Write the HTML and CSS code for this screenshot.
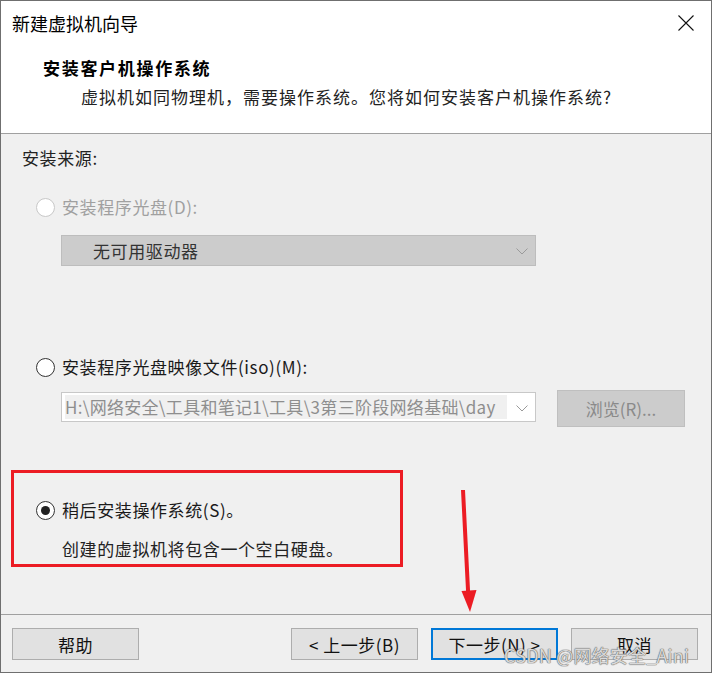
FILE: index.html
```html
<!DOCTYPE html>
<html lang="zh-CN">
<head>
<meta charset="utf-8">
<title>新建虚拟机向导</title>
<link rel="stylesheet" href="styles.css">
</head>
<body>
<div class="window">
  <div class="header">
    <div class="titlebar">
      <span class="title">新建虚拟机向导</span>
      <svg class="close" width="16" height="16" viewBox="0 0 16 16"><path d="M0.5 0.5 L15.5 15.5 M15.5 0.5 L0.5 15.5" stroke="#111" stroke-width="1.1" fill="none"/></svg>
    </div>
    <div class="heading">安装客户机操作系统</div>
    <div class="subtitle">虚拟机如同物理机，需要操作系统。您将如何安装客户机操作系统?</div>
  </div>

  <div class="content">
    <div class="section-label">安装来源:</div>

    <div class="radio-row first disabled">
      <span class="radio"></span>
      <span class="label">安装程序光盘(D):</span>
    </div>
    <div class="select disabled-select">
      <span class="select-text">无可用驱动器</span>
      <svg class="chev" width="12" height="7" viewBox="0 0 12 7"><path d="M0.5 0.5 L6 6 L11.5 0.5" stroke="#9a9a9a" fill="none" stroke-width="1"/></svg>
    </div>

    <div class="radio-row second">
      <span class="radio"></span>
      <span class="label">安装程序光盘映像文件(iso)(M):</span>
    </div>
    <div class="iso-row">
      <div class="select iso-select">
        <span class="select-text iso-text">H:\网络安全\工具和笔记1\工具\3第三阶段网络基础\day</span>
        <svg class="chev" width="12" height="7" viewBox="0 0 12 7"><path d="M0.5 0.5 L6 6 L11.5 0.5" stroke="#9a9a9a" fill="none" stroke-width="1"/></svg>
      </div>
      <div class="browse">浏览(R)...</div>
    </div>

    <div class="highlight">
      <div class="radio-row">
        <span class="radio checked"></span>
        <span class="label">稍后安装操作系统(S)。</span>
      </div>
      <div class="desc">创建的虚拟机将包含一个空白硬盘。</div>
    </div>
  </div>

  <div class="footer">
    <div class="btn">帮助</div>
    <div class="btn-group">
      <div class="btn">&lt; 上一步(B)</div>
      <div class="btn primary">下一步(N) &gt;</div>
      <div class="btn">取消</div>
    </div>
  </div>

  <svg class="arrow" width="40" height="140" viewBox="0 0 40 140">
    <path d="M13 0 L18.5 110" stroke="#ec1c24" stroke-width="4" fill="none" stroke-linecap="round"/>
    <polygon points="11.5,101 26.5,100 20,122" fill="#ec1c24"/>
  </svg>

  <div class="watermark">CSDN @网络安全_Aini</div>
</div>
</body>
</html>
```

FILE: styles.css
```css
html, body {
  margin: 0;
  padding: 0;
  background: #f0f0f0;
}

body {
  font-family: "Noto Sans CJK SC", "Microsoft YaHei", sans-serif;
  font-size: 17px;
  color: #1a1a1a;
}

.window {
  position: relative;
  width: 712px;
  height: 673px;
  box-sizing: border-box;
  border: 1px solid #6f6f6f;
  background: #f0f0f0;
  display: flex;
  flex-direction: column;
  overflow: hidden;
}

.header {
  background: #ffffff;
  height: 133px;
  box-sizing: border-box;
  border-bottom: 1px solid #a0a0a0;
  flex: none;
}

.titlebar {
  height: 44px;
  display: flex;
  align-items: center;
  justify-content: space-between;
  padding-left: 11px;
  padding-right: 17px;
}

.title {
  font-size: 18px;
  line-height: 24px;
  color: #000;
}

.close {
  display: block;
}

.heading {
  margin-top: 11px;
  margin-left: 42px;
  font-size: 17px;
  line-height: 24px;
  font-weight: 700;
  letter-spacing: 1.7px;
  color: #000;
}

.subtitle {
  margin-top: 5px;
  margin-left: 80px;
  font-size: 17px;
  line-height: 24px;
  letter-spacing: 1px;
  color: #222;
}

.content {
  flex: 1;
  padding-left: 21px;
  padding-top: 12px;
}

.section-label {
  line-height: 24px;
  letter-spacing: 0.6px;
  color: #222;
}

.radio-row {
  display: flex;
  align-items: center;
  height: 24px;
  margin-left: 14px;
}

.radio-row.first {
  margin-top: 25px;
}

.radio-row.second {
  margin-top: 89px;
}

.radio {
  width: 19px;
  height: 19px;
  box-sizing: border-box;
  border: 1px solid #333;
  border-radius: 50%;
  background: #fff;
  flex: none;
  position: relative;
}

.radio.checked::after {
  content: "";
  position: absolute;
  left: 4px;
  top: 4px;
  width: 9px;
  height: 9px;
  border-radius: 50%;
  background: #222;
}

.disabled .radio {
  border-color: #c8c8c8;
}

.label {
  margin-left: 7px;
  line-height: 24px;
  letter-spacing: 0.6px;
  color: #1a1a1a;
}

.disabled .label {
  color: #a0a0a0;
}

.select {
  box-sizing: border-box;
  width: 475px;
  height: 31px;
  margin-left: 39px;
  display: flex;
  align-items: center;
  position: relative;
}

.disabled-select {
  margin-top: 16px;
  background: #cccccc;
  border: 1px solid #bdbdbd;
}

.disabled-select .select-text {
  margin-left: 31px;
  color: #333;
  letter-spacing: 0.6px;
}

.chev {
  position: absolute;
  right: 7px;
  top: 12px;
}

.iso-row {
  margin-top: 11px;
  display: flex;
  align-items: flex-start;
}

.iso-select {
  margin-top: 2px;
  height: 30px;
  background: #fff;
  border: 1px solid #c8c8c8;
}

.iso-text {
  margin-left: 3px;
  width: 442px;
  overflow: hidden;
  white-space: nowrap;
  color: #8e8e8e;
  background: #f0f0f0;
  line-height: 24px;
  letter-spacing: 0.3px;
}

.browse {
  margin-left: 21px;
  width: 128px;
  height: 37px;
  box-sizing: border-box;
  background: #cccccc;
  border: 1px solid #bfbfbf;
  display: flex;
  align-items: center;
  justify-content: center;
  color: #8a8a8a;
}

.highlight {
  margin-top: 43px;
  margin-left: -11px;
  width: 392px;
  height: 97px;
  box-sizing: border-box;
  border: 3px solid #ec1c24;
  padding-top: 25px;
  padding-left: 8px;
}

.desc {
  margin-top: 15px;
  margin-left: 40px;
  line-height: 24px;
  letter-spacing: 0.6px;
  color: #222;
}

.footer {
  flex: none;
  height: 58px;
  box-sizing: border-box;
  border-top: 1px solid #a0a0a0;
  padding: 13px 13px 0 11px;
  display: flex;
  justify-content: space-between;
  align-items: flex-start;
}

.btn-group {
  display: flex;
  gap: 13px;
}

.btn {
  width: 127px;
  height: 32px;
  box-sizing: border-box;
  background: #e1e1e1;
  border: 1px solid #adadad;
  display: flex;
  align-items: center;
  justify-content: center;
  color: #111;
  font-size: 17px;
  letter-spacing: 0.5px;
}

.btn.primary {
  border: 2px solid #0078d7;
}

.arrow {
  position: absolute;
  left: 449px;
  top: 489px;
}

.watermark {
  position: absolute;
  left: 503px;
  top: 642px;
  font-size: 18px;
  line-height: 24px;
  color: rgba(255, 255, 255, 0.75);
  text-shadow: 0 0 1px #6a6a6a, 0 0 1px #6a6a6a, 0 0 1px #6a6a6a;
  white-space: nowrap;
  letter-spacing: 0.2px;
}
```
